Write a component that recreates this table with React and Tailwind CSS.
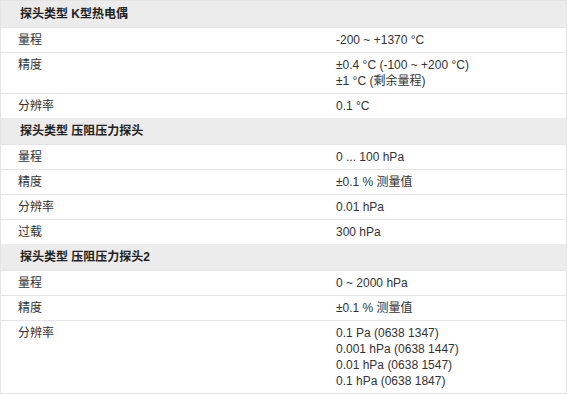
import React from 'react';

const sections = [
    {
        title: '探头类型 K型热电偶',
        rows: [
            { label: '量程', values: ['-200 ~ +1370 °C'] },
            { label: '精度', values: ['±0.4 °C (-100 ~ +200 °C)', '±1 °C (剩余量程)'] },
            { label: '分辨率', values: ['0.1 °C'] },
        ],
    },
    {
        title: '探头类型 压阻压力探头',
        rows: [
            { label: '量程', values: ['0 ... 100 hPa'] },
            { label: '精度', values: ['±0.1 % 测量值'] },
            { label: '分辨率', values: ['0.01 hPa'] },
            { label: '过载', values: ['300 hPa'] },
        ],
    },
    {
        title: '探头类型 压阻压力探头2',
        rows: [
            { label: '量程', values: ['0 ~ 2000 hPa'] },
            { label: '精度', values: ['±0.1 % 测量值'] },
            {
                label: '分辨率',
                values: ['0.1 Pa (0638 1347)', '0.001 hPa (0638 1447)', '0.01 hPa (0638 1547)', '0.1 hPa (0638 1847)'],
            },
        ],
    },
];

const App = () => {
    return (
        <div className="w-[567px] h-[394px] bg-white overflow-hidden">
            <div
                className="w-[567px] border border-[#e4e4e4] text-[12px] text-[#333]"
                style={{ fontFamily: '"Liberation Sans", Arial, "Noto Sans CJK SC", sans-serif' }}>
                {sections.map(sec => (
                    <div key={sec.title}>
                        <div className="h-[27px] bg-[#ececec] border-b border-[#e4e4e4] pl-[19px] flex items-center font-bold text-[#222]">
                            {sec.title}
                        </div>
                        {sec.rows.map((row, i) => (
                            <div key={i} className={`flex leading-[16px] ${i < sec.rows.length - 1 ? 'border-b border-[#e4e4e4]' : ''}`}>
                                <div className="w-[335px] pl-[17px] pt-[4px] pb-[4px]">{row.label}</div>
                                <div className="flex-1 pt-[4px] pb-[4px]">
                                    {row.values.map(v => (
                                        <div key={v}>{v}</div>
                                    ))}
                                </div>
                            </div>
                        ))}
                    </div>
                ))}
            </div>
        </div>
    );
};

export default App;
